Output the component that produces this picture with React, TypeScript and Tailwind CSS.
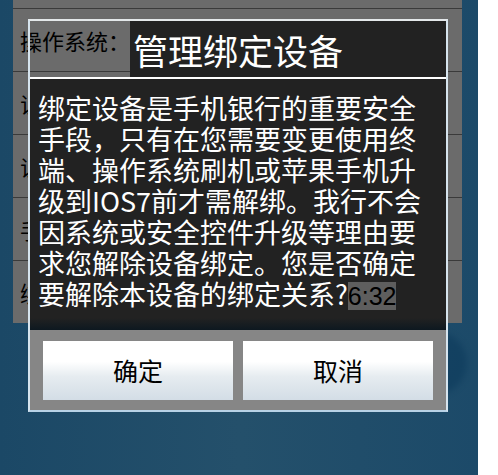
import React from "react";

const cjk = "font-['Noto_Sans_CJK_SC','Noto_Sans',sans-serif]";

const rows = [
  "操作系统：iOS 7.0.4",
  "证件类型：身份证",
  "证件号码：3201**********1234",
  "手机号码：138****5678",
  "绑定时间：2014-03-13 16:32",
];

const lines = [
  "绑定设备是手机银行的重要安全",
  "手段，只有在您需要变更使用终",
  "端、操作系统刷机或苹果手机升",
  "级到IOS7前才需解绑。我行不会",
  "因系统或安全控件升级等理由要",
  "求您解除设备绑定。您是否确定",
];

function InfoRows() {
  return (
    <div className="ml-[13px] h-[323px] w-[449px] bg-[#6b6b6b]">
      <div className="h-[8px]" />
      {rows.map((text, i) => (
        <div
          key={i}
          className={`flex h-[63px] items-center border-t border-[#3a3a3a] pl-[7px] text-[22px] text-black ${cjk}`}
        >
          {text}
        </div>
      ))}
    </div>
  );
}

function DialogButton(props: { label: string }) {
  return (
    <button
      type="button"
      className={`flex h-[59px] w-[190px] items-center justify-center bg-linear-to-b from-white from-35% via-[#e6ecf0] via-60% to-[#d3dde6] text-[25px] text-black ${cjk}`}
    >
      {props.label}
    </button>
  );
}

function UnbindDialog() {
  return (
    <div className="absolute left-[28px] top-[19px] flex h-[393px] w-[420px] flex-col border-2 border-t-[#e4e8ea] border-l-[#d6e4ee] border-r-[#d6e4ee] border-b-[#b8d2e6]">
      {/* title bar; the left end stays clear so the row underneath shows */}
      <div
        className={`flex h-[56px] items-center justify-center bg-[linear-gradient(to_right,transparent_100px,#222222_100px)] text-[35px] text-white ${cjk}`}
      >
        <span className="leading-none">管理绑定设备</span>
      </div>
      <div className="h-[2px] bg-white" />
      <div
        className={`h-[251px] bg-[linear-gradient(to_bottom,#222222_calc(100%-12px),#0d1820)] pl-[8px] pt-[13px] text-[27px] leading-[31px] text-white ${cjk}`}
      >
        {lines.map((l, i) => (
          <div key={i} className="whitespace-nowrap">
            {l}
          </div>
        ))}
        <div className="whitespace-nowrap">
          要解除本设备的绑定关系?
          <span className="bg-[#5e5e5e] font-['Liberation_Sans',sans-serif] text-[25px] text-black">
            6:32
          </span>
        </div>
      </div>
      <div className="flex h-[80px] gap-[10px] bg-[#868686] pl-[13px] pt-[11px]">
        <DialogButton label="确定" />
        <DialogButton label="取消" />
      </div>
    </div>
  );
}

export default function App() {
  return (
    <div className="flex h-[475px] w-[498px] overflow-hidden">
      <div className="relative h-full w-[478px] bg-linear-to-r from-[#1b4866] via-[#24506b] to-[#1c4a69]">
        <div className="absolute left-[405px] top-[332px] h-[62px] w-[62px] rounded-full bg-[#0f3d5e] opacity-70 blur-[3px]" />
        <div className="relative">
          <InfoRows />
        </div>
        <UnbindDialog />
      </div>
      <div className="flex-1 bg-white" />
    </div>
  );
}
